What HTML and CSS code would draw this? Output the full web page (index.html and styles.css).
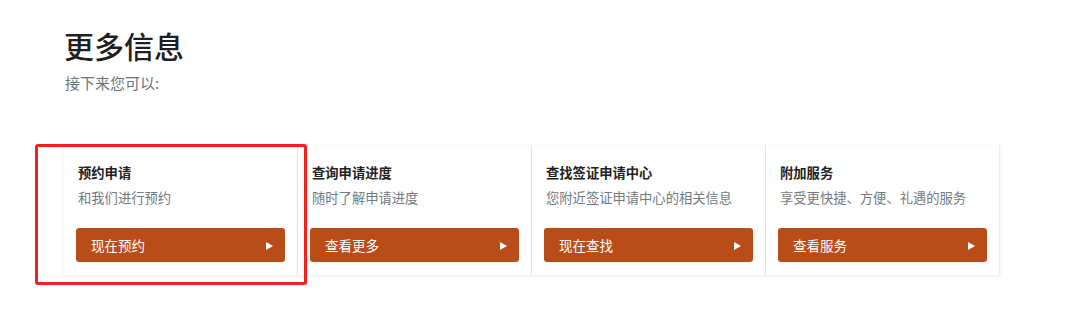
FILE: index.html
```html
<!DOCTYPE html>
<html lang="zh-CN">
<head>
  <meta charset="UTF-8">
  <meta name="viewport" content="width=device-width, initial-scale=1.0">
  <title>更多信息</title>
  <link rel="stylesheet" href="styles.css">
</head>
<body>
  <div class="page">
    <h2 class="title">更多信息</h2>
    <p class="subtitle">接下来您可以:</p>
    <div class="cards">
      <div class="card">
        <div class="card-title">预约申请</div>
        <div class="card-desc">和我们进行预约</div>
        <a class="btn" href="#">现在预约<span class="arrow"></span></a>
      </div>
      <div class="card">
        <div class="card-title">查询申请进度</div>
        <div class="card-desc">随时了解申请进度</div>
        <a class="btn" href="#">查看更多<span class="arrow"></span></a>
      </div>
      <div class="card">
        <div class="card-title">查找签证申请中心</div>
        <div class="card-desc">您附近签证申请中心的相关信息</div>
        <a class="btn" href="#">现在查找<span class="arrow"></span></a>
      </div>
      <div class="card">
        <div class="card-title">附加服务</div>
        <div class="card-desc">享受更快捷、方便、礼遇的服务</div>
        <a class="btn" href="#">查看服务<span class="arrow"></span></a>
      </div>
      <!-- 标注框 -->
      <div class="highlight"></div>
    </div>
  </div>
</body>
</html>
```

FILE: styles.css
```css
body { margin: 0; padding: 0; background: #fff; font-family: "Noto Sans CJK SC", "Liberation Sans", sans-serif; color: #222; }
.page { padding: 25px 0 48px 64px; }
.title { margin: 0; font-size: 30px; line-height: 40px; font-weight: 500; color: #1f1f1f; }
.subtitle { margin: 7px 0 0 1px; font-size: 15px; line-height: 22px; color: #6c737a; }
.cards { position: relative; display: flex; width: 936px; margin-top: 51px; }
.card { flex: 1; background: #fff; padding: 18px 12px 13px; box-shadow: 0 1px 4px rgba(0, 0, 0, 0.08); border-right: 1px solid #e9ecf0; }
.card-title { padding-left: 2px; font-size: 13.3px; line-height: 20px; font-weight: 600; color: #222; }
.card-desc { padding-left: 2px; margin-top: 5px; font-size: 13.3px; line-height: 20px; color: #737a82; }
.btn { display: flex; align-items: center; justify-content: space-between; height: 34px; margin-top: 20px; padding: 0 12px 0 15px; background: #b84d1a; border-radius: 3px; color: #fff; font-size: 13.5px; text-decoration: none; }
.arrow { width: 0; height: 0; border-left: 7px solid #fff; border-top: 4px solid transparent; border-bottom: 4px solid transparent; margin-top: 2px; }
.highlight { position: absolute; left: -29px; top: -1px; width: 266px; height: 135px; border: 3px solid #f5201c; border-radius: 3px; pointer-events: none; }
```
